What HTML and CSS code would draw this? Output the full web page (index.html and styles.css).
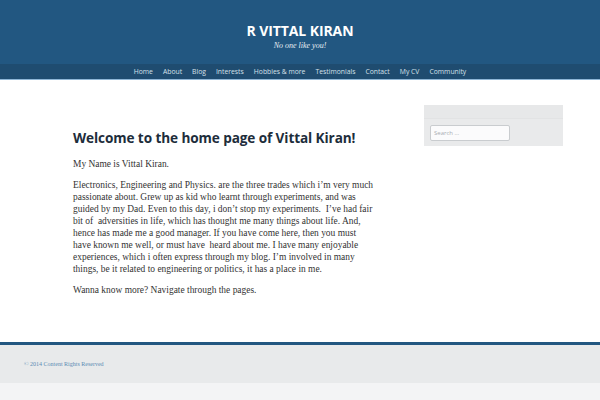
FILE: index.html
```html
<!DOCTYPE html>
<html>
<head>
<meta charset="utf-8">
<link rel="stylesheet" href="styles.css">
</head>
<body>
<header class="site-header">
  <div class="branding">
    <h1 class="site-title">R VITTAL KIRAN</h1>
    <p class="site-desc">No one like you!</p>
  </div>
  <nav class="main-nav">
    <ul>
      <li>Home</li><li>About</li><li>Blog</li><li>Interests</li><li>Hobbies &amp; more</li><li>Testimonials</li><li>Contact</li><li>My CV</li><li>Community</li>
    </ul>
  </nav>
</header>
<div class="content">
  <main class="main">
    <h2 class="entry-title">Welcome to the home page of Vittal Kiran!</h2>
    <p>My Name is Vittal Kiran.</p>
    <p>Electronics, Engineering and Physics. are the three trades which i’m very much<br>passionate about. Grew up as kid who learnt through experiments, and was<br>guided by my Dad. Even to this day, i don’t stop my experiments.&nbsp; I’ve had fair<br>bit of&nbsp; adversities in life, which has thought me many things about life. And,<br>hence has made me a good manager. If you have come here, then you must<br>have known me well, or must have&nbsp; heard about me. I have many enjoyable<br>experiences, which i often express through my blog. I’m involved in many<br>things, be it related to engineering or politics, it has a place in me.</p>
    <p>Wanna know more? Navigate through the pages.</p>
  </main>
  <aside class="sidebar">
    <div class="widget">
      <div class="widget-top"></div>
      <div class="widget-body">
        <div class="search">Search …</div>
      </div>
    </div>
  </aside>
</div>
<footer class="site-footer">
  <div class="footer-inner">© 2014 Content Rights Reserved</div>
  <div class="footer-bottom"></div>
</footer>
</body>
</html>
```

FILE: styles.css
```css
html, body { margin: 0; padding: 0; }
body {
  background: #ffffff;
  font-family: "Liberation Serif", "DejaVu Serif", serif;
  color: #333;
}
.site-header { background: #225781; }
.branding {
  height: 64px;
  display: flex;
  flex-direction: column;
  align-items: center;
  box-sizing: border-box;
  padding-top: 22px;
}
.site-title {
  margin: 0;
  font-family: "Open Sans", sans-serif;
  font-weight: 700;
  font-size: 14px;
  line-height: 18px;
  color: #ffffff;
  letter-spacing: -0.1px;
}
.site-desc {
  margin: 1px 0 0;
  font-family: "Liberation Serif", serif;
  font-style: italic;
  font-size: 8px;
  line-height: 10px;
  color: #e8eef4;
}
.main-nav {
  background: #1f4c70;
  height: 15px;
  border-bottom: 1px solid #8fb6d6;
}
.main-nav ul {
  margin: 0;
  padding: 0;
  list-style: none;
  display: flex;
  justify-content: center;
  gap: 10px;
}
.main-nav li {
  font-family: "Open Sans", sans-serif;
  font-size: 6.8px;
  line-height: 15px;
  color: #d4e0ea;
}
.content {
  display: flex;
  justify-content: space-between;
  padding: 0 37px 0 73px;
  height: 262px;
}
.main {
  width: 310px;
  padding-top: 48px;
}
.entry-title {
  margin: 0 0 10px;
  font-family: "Open Sans", sans-serif;
  font-weight: 700;
  font-size: 13.6px;
  line-height: 20px;
  color: #1d2d3b;
  letter-spacing: -0.1px;
  white-space: nowrap;
}
.main p {
  margin: 0 0 9px;
  font-size: 9.45px;
  line-height: 12px;
  color: #333333;
  white-space: nowrap;
}
.sidebar {
  width: 139px;
  padding-top: 25px;
}
.widget {
  background: #e9eaeb;
}
.widget-top {
  height: 13px;
  border-bottom: 1px solid #e2e3e4;
  background: #e7e8e9;
}
.widget-body {
  padding: 6px 6px 5px;
}
.search {
  width: 80px;
  height: 16px;
  box-sizing: border-box;
  border: 1px solid #c9cccf;
  border-radius: 2px;
  background: #fbfbfc;
  font-family: "Open Sans", sans-serif;
  font-size: 6px;
  line-height: 14px;
  padding-left: 3px;
  color: #a8adb2;
}
.site-footer {
  border-top: 3px solid #225781;
}
.footer-inner {
  background: #e8eaeb;
  height: 38px;
  box-sizing: border-box;
  padding: 15px 0 0 24px;
  font-family: "Liberation Serif", serif;
  font-size: 6px;
  line-height: 8px;
  color: #5b8ab3;
}
.footer-bottom {
  background: #f3f4f5;
  height: 17px;
}
```
